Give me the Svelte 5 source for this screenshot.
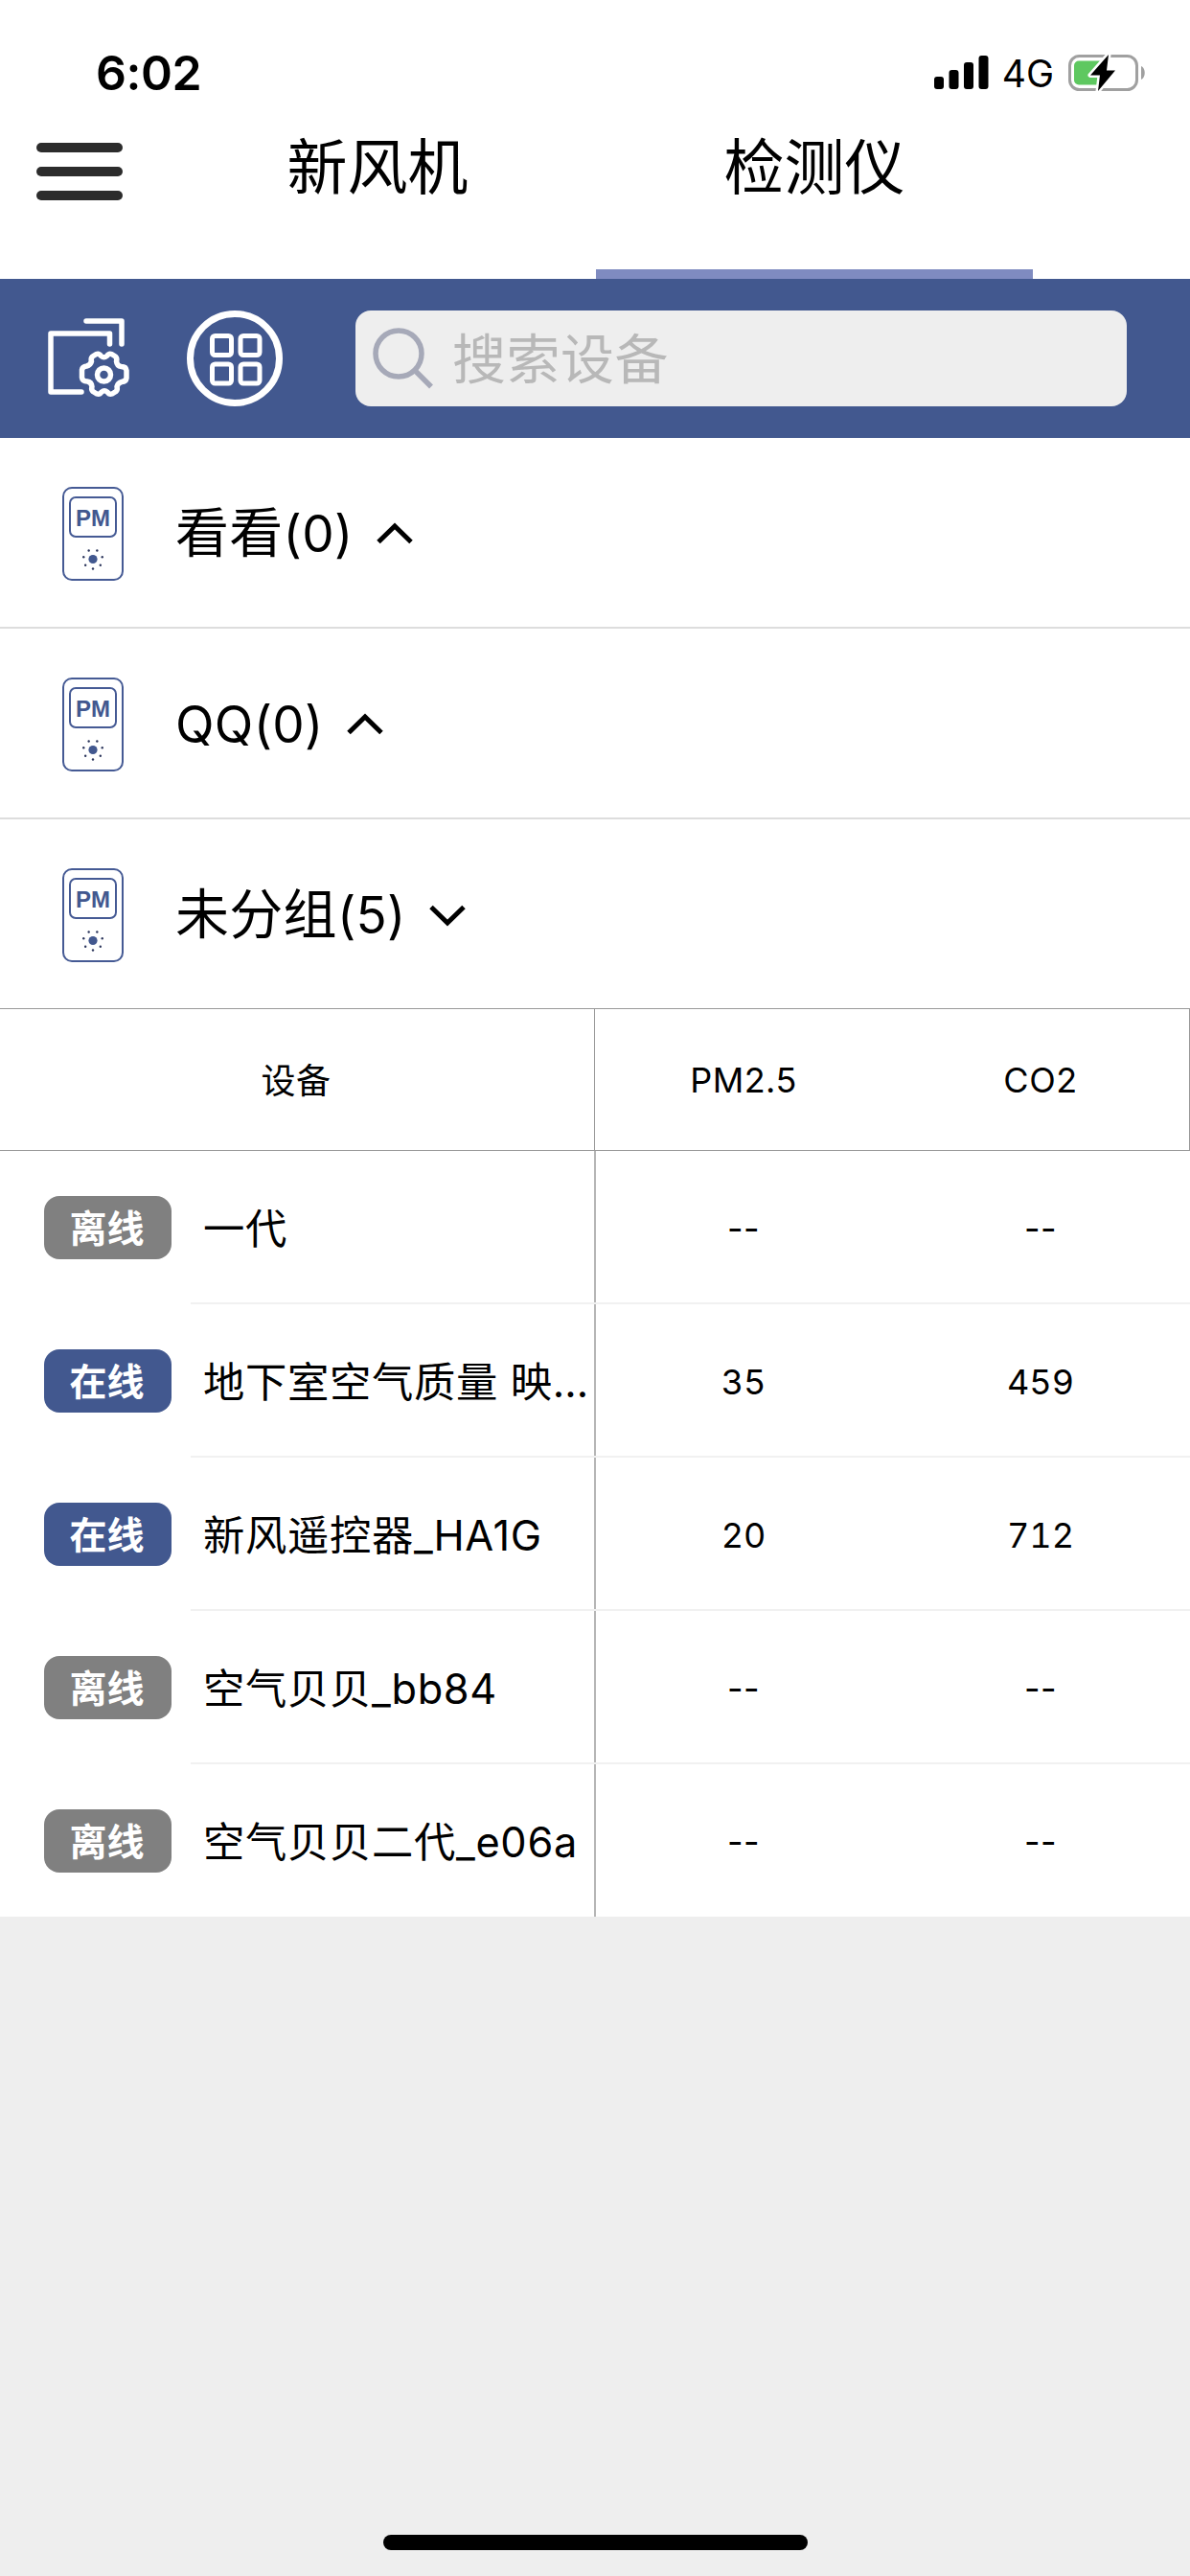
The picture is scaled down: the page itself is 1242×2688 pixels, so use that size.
<script>
	const tabs = ['新风机', '检测仪'];
	let activeTab = $state(1);

	let groups = $state([
		{ name: '看看', count: 0, open: false },
		{ name: 'QQ', count: 0, open: false },
		{ name: '未分组', count: 5, open: true }
	]);

	const devices = [
		{ online: false, name: '一代', pm: '--', co2: '--' },
		{ online: true, name: '地下室空气质量 映…', pm: '35', co2: '459' },
		{ online: true, name: '新风遥控器_HA1G', pm: '20', co2: '712' },
		{ online: false, name: '空气贝贝_bb84', pm: '--', co2: '--' },
		{ online: false, name: '空气贝贝二代_e06a', pm: '--', co2: '--' }
	];

	// Dots around the sensor on the device icon
	const dots = Array.from({ length: 7 }, (_, i) => {
		const a = Math.PI / 2 + (i * 2 * Math.PI) / 7;
		return { x: 32 + 10 * Math.cos(a), y: 75.5 + 10 * Math.sin(a) };
	});

	/** @param {string} text */
	function hasChinese(text) {
		return /[\u4e00-\u9fff]/.test(text);
	}
</script>

<div class="screen">
	<div class="status">
		<span class="time">6:02</span>
		<div class="status-right">
			<svg class="signal" width="57" height="36" viewBox="0 0 57 36">
				<rect x="0" y="22" width="10" height="13" rx="3" />
				<rect x="15.5" y="15" width="10" height="20" rx="3" />
				<rect x="31" y="7" width="10" height="28" rx="3" />
				<rect x="46.5" y="0" width="10" height="35" rx="3" />
			</svg>
			<span class="network">4G</span>
			<svg class="battery" width="81" height="42" viewBox="0 0 81 42">
				<rect x="1.5" y="3.5" width="70" height="35" rx="10" fill="none" stroke="#a0a0a0" stroke-width="3" />
				<path d="M76 14c5 2 5 12 0 14z" fill="#a0a0a0" />
				<rect x="6" y="8.5" width="31" height="25" rx="5" fill="#5ec860" />
				<path
					d="M42 2L23 23.5h10L31 40l18-21.5H40z"
					fill="#000"
					stroke="#fff"
					stroke-width="5"
					stroke-linejoin="round"
					paint-order="stroke"
				/>
			</svg>
		</div>
	</div>

	<header class="header">
		<button class="menu" aria-label="menu">
			<span></span>
			<span></span>
			<span></span>
		</button>
		<nav class="tabs">
			{#each tabs as tab, i}
				<button class="tab" class:active={activeTab === i} onclick={() => (activeTab = i)}>{tab}</button>
			{/each}
		</nav>
	</header>

	<div class="toolbar">
		<svg class="manage" width="86" height="100" viewBox="0 0 86 100">
			<g fill="none" stroke="#fff" stroke-width="5.5" stroke-linecap="round" stroke-linejoin="round">
				<path d="M35 85H3V24h61.5v11" />
				<path d="M40 11h37v24" />
				<path
					d="M50.5 45.5q3-1 5 2 3 2.5 6 0 2-3 5-2l4 2.5q2 2 1 5 .5 5 5 5.5 5 0 5.5 4v8q-.5 3.5-5 4-4 1-5 5 1 3-1 5l-4 2.5q-3 1-5-2-3-2.5-6 0-2 3-5 2l-4-2.5q-2-2-1-5-.5-5-5-5.5-5 0-5.5-4v-8q.5-3.5 5-4 4-1 5-5-1-3 1-5z"
				/>
				<circle cx="58.5" cy="67" r="7" />
			</g>
		</svg>
		<svg class="grid" width="100" height="100" viewBox="0 0 100 100">
			<g fill="none" stroke="#fff">
				<circle cx="50" cy="50" r="46.5" stroke-width="7" />
				<g stroke-width="5">
					<rect x="26.5" y="26.5" width="20" height="20" rx="3" />
					<rect x="56" y="26.5" width="20" height="20" rx="3" />
					<rect x="26.5" y="56" width="20" height="20" rx="3" />
					<rect x="56" y="56" width="20" height="20" rx="3" />
				</g>
			</g>
		</svg>
		<label class="search">
			<svg width="64" height="64" viewBox="0 0 64 64">
				<g fill="none" stroke="#a6a9b8" stroke-width="5.5">
					<circle cx="27" cy="27" r="24" />
					<path d="M43.5 44L61 61.5" />
				</g>
			</svg>
			<span>搜索设备</span>
		</label>
	</div>

	{#each groups as group, i}
		<button class="group" class:last={i === groups.length - 1} onclick={() => (group.open = !group.open)}>
			<svg class="device-icon" width="64" height="98" viewBox="0 0 64 98">
				<g fill="none" stroke="#455a94" stroke-width="2">
					<rect x="1" y="1" width="62" height="96" rx="9" />
					<rect x="8" y="11" width="48" height="41" rx="6" />
				</g>
				<text x="32" y="40.5" text-anchor="middle">PM</text>
				<circle cx="32" cy="75.5" r="4.6" fill="#42588f" />
				{#each dots as dot}
					<circle cx={dot.x} cy={dot.y} r="1.2" fill="#2c365c" />
				{/each}
			</svg>
			<span class="group-name"><span class:chinese={hasChinese(group.name)}>{group.name}</span>({group.count})</span>
			<svg class="chevron" class:open={group.open} width="40" height="24" viewBox="0 0 40 24">
				<path d="M3 20.5L20 4l17 16.5" fill="none" stroke="#000" stroke-width="5" />
			</svg>
		</button>
	{/each}

	<div class="table-head">
		<div class="head-device">设备</div>
		<div class="head-value">PM2.5</div>
		<div class="head-value">CO2</div>
	</div>

	<div class="table">
		{#each devices as device}
			<div class="row">
				<span class="badge" class:online={device.online}>{device.online ? '在线' : '离线'}</span>
				<div class="row-body">
					<span class="device-name">{device.name}</span>
					<span class="value" class:number={device.online}>{device.pm}</span>
					<span class="value" class:number={device.online}>{device.co2}</span>
				</div>
			</div>
		{/each}
	</div>

	<div class="home-bar"></div>
</div>

<style>
	:global(body) {
		margin: 0;
		background: #eee;
	}
	.screen {
		display: flex;
		flex-direction: column;
		width: 1242px;
		height: 2688px;
		overflow: hidden;
		background: #eee;
		color: #000;
		font-family: Inter, 'Noto Sans CJK SC', sans-serif;
		line-height: 1.2;
	}
	button {
		margin: 0;
		padding: 0;
		border: none;
		background: none;
		color: inherit;
		font: inherit;
	}
	svg {
		display: block;
		flex: none;
	}
	.status {
		display: flex;
		justify-content: space-between;
		align-items: center;
		height: 132px;
		box-sizing: border-box;
		padding: 20px 46px 0 100px;
		background: #fff;
	}
	.time {
		font-size: 50px;
		font-weight: 600;
		letter-spacing: -0.5px;
	}
	.status-right {
		display: flex;
		align-items: center;
	}
	.network {
		margin: 3px 15px 0 14px;
		font-size: 39px;
	}
	.header {
		display: flex;
		height: 159px;
		background: #fff;
	}
	.menu {
		display: flex;
		flex-direction: column;
		gap: 15px;
		width: 166px;
		padding: 17px 38px 0;
	}
	.menu span {
		width: 90px;
		height: 10px;
		border-radius: 5px;
		background: #2c2c2c;
	}
	.tabs {
		display: flex;
	}
	.tab {
		width: 456px;
		padding-bottom: 64px;
		box-sizing: border-box;
		border-bottom: 10px solid transparent;
		font-size: 63px;
		line-height: 1;
	}
	.tab.active {
		border-color: #7f8bc0;
	}
	.toolbar {
		display: flex;
		align-items: center;
		height: 166px;
		background: #42588f;
	}
	.manage {
		margin-left: 50px;
	}
	.grid {
		margin-left: 59px;
	}
	.search {
		display: flex;
		align-items: center;
		gap: 19px;
		width: 805px;
		height: 100px;
		box-sizing: border-box;
		margin-left: 76px;
		padding-left: 18px;
		border-radius: 16px;
		background: #eee;
		color: #b8b8b8;
		font-size: 56px;
		letter-spacing: 0.5px;
	}
	.search span {
		padding-top: 4px;
	}
	.group {
		display: flex;
		align-items: center;
		height: 199px;
		box-sizing: border-box;
		padding: 3px 0 0 65px;
		border-bottom: 2px solid #ddd;
		background: #fff;
		text-align: left;
	}
	.group.last {
		height: 197px;
		padding-top: 2px;
		border-bottom: none;
	}
	.device-icon text {
		font-family: 'Liberation Sans', sans-serif;
		font-size: 24px;
		font-weight: 700;
		fill: #42588f;
	}
	.group-name {
		margin: 0 23px 0 54px;
		padding-top: 2px;
		font-size: 53px;
		letter-spacing: 0.3px;
	}
	.chinese {
		font-size: 56px;
		line-height: 1;
	}
	.chevron.open {
		transform: rotate(180deg);
	}
	.table-head {
		display: flex;
		height: 149px;
		box-sizing: border-box;
		padding-top: 3px;
		border: solid #999;
		border-width: 1px 1px 1px 0;
		background: linear-gradient(#999, #999) 620px 0 / 1px 100% no-repeat #fff;
		font-size: 36px;
		letter-spacing: 0.5px;
	}
	.head-device,
	.head-value {
		display: flex;
		align-items: center;
		justify-content: center;
		width: 310px;
	}
	.head-device {
		width: 621px;
		box-sizing: border-box;
		padding: 2px 3px 0 0;
	}
	.table {
		height: 799px;
		background: linear-gradient(#b5b5b5, #b5b5b5) 620px 0 / 2px 100% no-repeat #fff;
	}
	.row {
		display: flex;
		align-items: center;
		height: 160px;
		padding-left: 46px;
	}
	.badge {
		width: 133px;
		height: 66px;
		margin-right: 20px;
		box-sizing: border-box;
		padding: 1px 2px 0 0;
		border-radius: 16px;
		background: #808080;
		color: #fff;
		font-size: 39px;
		font-weight: 700;
		line-height: 66px;
		text-align: center;
	}
	.badge.online {
		background: #42588f;
	}
	.row-body {
		display: flex;
		align-items: center;
		flex: 1;
		height: 160px;
		box-sizing: border-box;
		padding-top: 5px;
		border-bottom: 2px solid #f1f1f1;
	}
	.row:last-child .row-body {
		border-bottom-color: transparent;
	}
	.device-name {
		width: 409px;
		margin-left: 13px;
		overflow: hidden;
		font-size: 43.3px;
		letter-spacing: 0.7px;
		white-space: nowrap;
	}
	.value {
		width: 310px;
		font-size: 36px;
		letter-spacing: 0.5px;
		text-align: center;
	}
	.value.number {
		font-variant-numeric: tabular-nums;
		letter-spacing: 0;
	}
	.home-bar {
		width: 443px;
		height: 16px;
		margin: auto auto 27px 400px;
		border-radius: 8px;
		background: #000;
	}
</style>
